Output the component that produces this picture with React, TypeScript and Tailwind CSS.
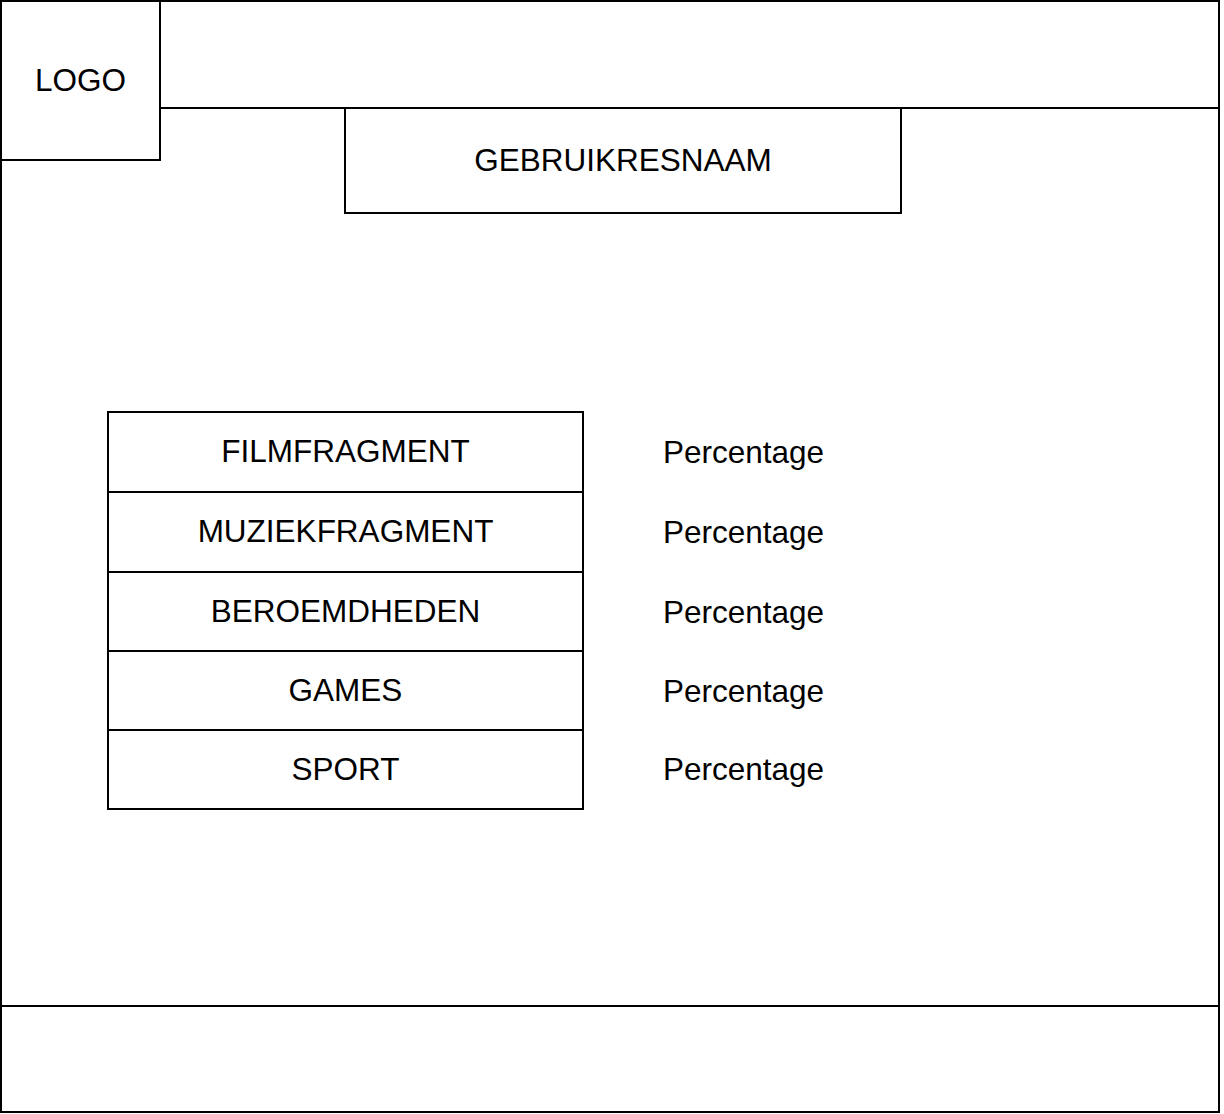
import React from "react";

const cats = [
  { name: "FILMFRAGMENT", h: 78 },
  { name: "MUZIEKFRAGMENT", h: 78 },
  { name: "BEROEMDHEDEN", h: 77 },
  { name: "GAMES", h: 77 },
  { name: "SPORT", h: 77 },
];

export default function App() {
  return (
    <div
      className="bg-white w-[1224px] h-[1114px] text-black"
      style={{ fontFamily: '"Liberation Sans", Arial, Helvetica, sans-serif' }}
    >
      <div className="w-[1220px] h-[1113px] border-2 border-black flex flex-col">
        <div className="flex items-start">
          <div className="w-[159px] h-[159px] border-r-2 border-b-2 border-black flex items-center justify-center text-[31.5px] leading-none">
            LOGO
          </div>
          <div className="flex-1 flex flex-col -ml-[2px]">
            <div className="h-[107px] border-b-2 border-black" />
            <div className="ml-[185px] w-[558px] h-[105px] border-x-2 border-b-2 border-black flex items-center justify-center text-[31.5px] leading-none">
              GEBRUIKRESNAAM
            </div>
          </div>
        </div>
        <div className="flex-1">
          <div className="mt-[197px] ml-[105px] flex">
            <div className="w-[477px] border-2 border-black flex flex-col">
              {cats.map((c, i) => (
                <div
                  key={c.name}
                  className={`flex items-center justify-center text-[31.5px] leading-none ${i < cats.length - 1 ? "border-b-2 border-black" : ""}`}
                  style={{ height: c.h + (i < cats.length - 1 ? 2 : 0) }}
                >
                  {c.name}
                </div>
              ))}
            </div>
            <div className="ml-[79px] pt-[2px] flex flex-col">
              {cats.map((c, i) => (
                <div
                  key={c.name}
                  className="flex items-center text-[31.5px] leading-none"
                  style={{ height: c.h + (i < cats.length - 1 ? 2 : 0) }}
                >
                  Percentage
                </div>
              ))}
            </div>
          </div>
        </div>
        <div className="h-[106px] border-t-2 border-black" />
      </div>
    </div>
  );
}
